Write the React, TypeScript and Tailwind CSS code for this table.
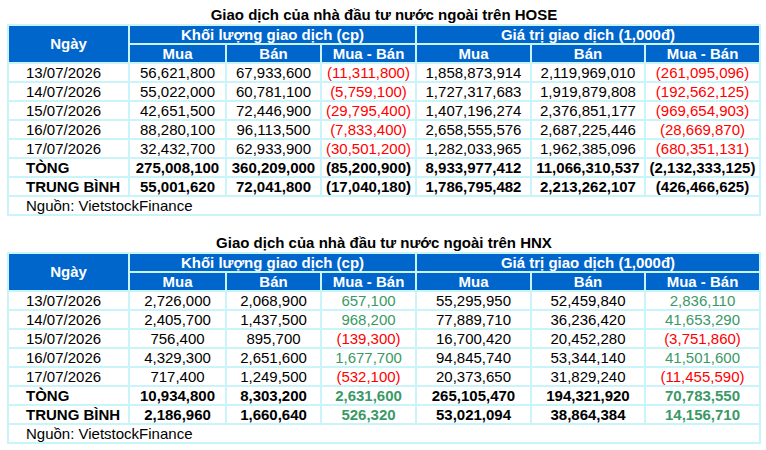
import React from "react";

type Row = { d: string; v: string[]; c?: ("r" | "g" | "")[] };

const hose: Row[] = [
  { d: "13/07/2026", v: ["56,621,800", "67,933,600", "(11,311,800)", "1,858,873,914", "2,119,969,010", "(261,095,096)"] },
  { d: "14/07/2026", v: ["55,022,000", "60,781,100", "(5,759,100)", "1,727,317,683", "1,919,879,808", "(192,562,125)"] },
  { d: "15/07/2026", v: ["42,651,500", "72,446,900", "(29,795,400)", "1,407,196,274", "2,376,851,177", "(969,654,903)"] },
  { d: "16/07/2026", v: ["88,280,100", "96,113,500", "(7,833,400)", "2,658,555,576", "2,687,225,446", "(28,669,870)"] },
  { d: "17/07/2026", v: ["32,432,700", "62,933,900", "(30,501,200)", "1,282,033,965", "1,962,385,096", "(680,351,131)"] },
];
const hoseTot = ["275,008,100", "360,209,000", "(85,200,900)", "8,933,977,412", "11,066,310,537", "(2,132,333,125)"];
const hoseAvg = ["55,001,620", "72,041,800", "(17,040,180)", "1,786,795,482", "2,213,262,107", "(426,466,625)"];

const hnx: Row[] = [
  { d: "13/07/2026", v: ["2,726,000", "2,068,900", "657,100", "55,295,950", "52,459,840", "2,836,110"] },
  { d: "14/07/2026", v: ["2,405,700", "1,437,500", "968,200", "77,889,710", "36,236,420", "41,653,290"] },
  { d: "15/07/2026", v: ["756,400", "895,700", "(139,300)", "16,700,420", "20,452,280", "(3,751,860)"] },
  { d: "16/07/2026", v: ["4,329,300", "2,651,600", "1,677,700", "94,845,740", "53,344,140", "41,501,600"] },
  { d: "17/07/2026", v: ["717,400", "1,249,500", "(532,100)", "20,373,650", "31,829,240", "(11,455,590)"] },
];
const hnxTot = ["10,934,800", "8,303,200", "2,631,600", "265,105,470", "194,321,920", "70,783,550"];
const hnxAvg = ["2,186,960", "1,660,640", "526,320", "53,021,094", "38,864,384", "14,156,710"];

function colorOf(v: string, idx: number, colorPos: boolean) {
  if (idx !== 2 && idx !== 5) return "text-black";
  if (v.startsWith("(")) return "text-[#ff0000]";
  return colorPos ? "text-[#3a9966]" : "text-black";
}

const cell = "bg-white h-[17px] leading-[17px] text-[15px] whitespace-nowrap";
const head = "bg-[#0066cc] text-white font-bold text-[15px] h-[17px] leading-[17px] text-center whitespace-nowrap";

function Table({ title, rows, tot, avg, green, mt }: { title: string; rows: Row[]; tot: string[]; avg: string[]; green: boolean; mt: string }) {
  return (
    <div className={mt}>
      <div className="w-[754px] ml-[7px] text-center font-bold text-[15px] leading-[18px] text-black">{title}</div>
      <div className="ml-[7px] w-[754px] grid grid-cols-[119px_95px_93px_93px_113px_112px_113px] gap-[2px] p-[2px] bg-[#c9f4f9]">
        <div className="bg-[#0066cc] text-white font-bold text-[15px] row-span-2 flex items-center justify-center">Ngày</div>
        <div className={`${head} col-span-3`}>Khối lượng giao dịch (cp)</div>
        <div className={`${head} col-span-3`}>Giá trị giao dịch (1,000đ)</div>
        <div className={head}>Mua</div>
        <div className={head}>Bán</div>
        <div className={head}>Mua - Bán</div>
        <div className={head}>Mua</div>
        <div className={head}>Bán</div>
        <div className={head}>Mua - Bán</div>
        {rows.map((r) => (
          <React.Fragment key={r.d}>
            <div className={`${cell} pl-[17px] text-black`}>{r.d}</div>
            {r.v.map((v, i) => (
              <div key={i} className={`${cell} text-center ${colorOf(v, i, green)}`}>{v}</div>
            ))}
          </React.Fragment>
        ))}
        <div className={`${cell} pl-[17px] font-bold text-black`}>TÒNG</div>
        {tot.map((v, i) => (
          <div key={i} className={`${cell} text-center font-bold ${green ? colorOf(v, i, true) : "text-black"}`}>{v}</div>
        ))}
        <div className={`${cell} pl-[17px] font-bold text-black`}>TRUNG BÌNH</div>
        {avg.map((v, i) => (
          <div key={i} className={`${cell} text-center font-bold ${green ? colorOf(v, i, true) : "text-black"}`}>{v}</div>
        ))}
        <div className={`${cell} col-span-7 pl-[17px] text-black`}>Nguồn: VietstockFinance</div>
      </div>
    </div>
  );
}

export default function App() {
  return (
    <div className="w-[766px] h-[450px] bg-white overflow-hidden" style={{ fontFamily: '"Liberation Sans", Arial, sans-serif' }}>
      <Table title="Giao dịch của nhà đầu tư nước ngoài trên HOSE" rows={hose} tot={hoseTot} avg={hoseAvg} green={false} mt="pt-[6px]" />
      <Table title="Giao dịch của nhà đầu tư nước ngoài trên HNX" rows={hnx} tot={hnxTot} avg={hnxAvg} green={true} mt="mt-[18px]" />
    </div>
  );
}
